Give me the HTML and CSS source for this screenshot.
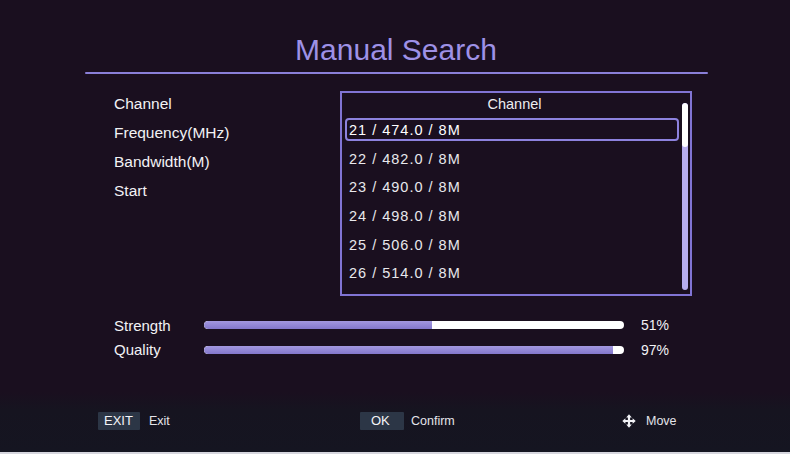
FILE: index.html
```html
<!DOCTYPE html>
<html lang="en">
<head>
<meta charset="utf-8">
<title>Manual Search</title>
<link rel="stylesheet" href="styles.css">
</head>
<body>
<div class="screen">
  <header class="head">
    <h1 class="title">Manual Search</h1>
    <div class="rule"></div>
  </header>

  <section class="main">
    <ul class="labels">
      <li>Channel</li>
      <li>Frequency(MHz)</li>
      <li>Bandwidth(M)</li>
      <li>Start</li>
    </ul>
    <div class="listbox">
      <div class="listcol">
        <div class="listhead">Channel</div>
        <ul class="items">
          <li class="item"><span class="sel">21 / 474.0 / 8M</span></li>
          <li class="item"><span>22 / 482.0 / 8M</span></li>
          <li class="item"><span>23 / 490.0 / 8M</span></li>
          <li class="item"><span>24 / 498.0 / 8M</span></li>
          <li class="item"><span>25 / 506.0 / 8M</span></li>
          <li class="item"><span>26 / 514.0 / 8M</span></li>
        </ul>
      </div>
      <div class="scroll"><div class="thumb"></div></div>
    </div>
  </section>

  <section class="signal">
    <div class="sigrow">
      <span class="siglabel">Strength</span>
      <div class="bar"><div class="fill" style="width:54.3%"></div></div>
      <span class="pct">51%</span>
    </div>
    <div class="sigrow">
      <span class="siglabel">Quality</span>
      <div class="bar"><div class="fill" style="width:97.4%"></div></div>
      <span class="pct">97%</span>
    </div>
  </section>

  <footer class="foot">
    <div class="hint"><span class="key">EXIT</span><span class="desc">Exit</span></div>
    <div class="hint"><span class="key key-ok">OK</span><span class="desc desc-ok">Confirm</span></div>
    <div class="hint">
      <svg class="move" viewBox="0 0 14 14" width="14" height="14" aria-hidden="true">
        <path d="M7 0.3 L9.8 3.4 H8.1 V5.9 H10.6 V4.2 L13.7 7 L10.6 9.8 V8.1 H8.1 V10.6 H9.8 L7 13.7 L4.2 10.6 H5.9 V8.1 H3.4 V9.8 L0.3 7 L3.4 4.2 V5.9 H5.9 V3.4 H4.2 Z" fill="#f2f2f6"/>
      </svg>
      <span class="desc">Move</span>
    </div>
  </footer>
</div>
</body>
</html>
```

FILE: styles.css
```css
* { box-sizing: border-box; }

html, body {
  margin: 0;
  padding: 0;
  background: #1a0f1f;
}

body {
  font-family: "Liberation Sans", Arial, sans-serif;
  color: #f0eff4;
}

.screen {
  width: 790px;
  height: 454px;
  display: flex;
  flex-direction: column;
  background: #1a0f1f;
  overflow: hidden;
}

/* header */
.head {
  padding-top: 35px;
}

.title {
  margin: 0;
  height: 30px;
  line-height: 30px;
  font-size: 30px;
  font-weight: normal;
  text-align: center;
  color: #9e91e6;
  padding-left: 2px;
}

.rule {
  margin: 7px 82px 0 85px;
  height: 2px;
  background: #8a7fd8;
  border-radius: 1px;
}

/* main */
.main {
  display: flex;
  padding: 17px 0 0 114px;
}

.labels {
  list-style: none;
  margin: -2px 0 0;
  padding: 0;
  flex: 0 0 226px;
  font-size: 15.5px;
  line-height: 29px;
  color: #f2f2f5;
}

.listbox {
  flex: 0 0 352px;
  height: 205px;
  border: 2px solid #8174d4;
  display: flex;
}

.listcol {
  flex: 1;
  padding-right: 3px;
}

.listhead {
  height: 22px;
  line-height: 22px;
  text-align: center;
  font-size: 14.5px;
  color: #ececf0;
  padding-left: 8px;
}

.items {
  list-style: none;
  margin: 0;
  padding: 0;
}

.item {
  height: 28.7px;
  display: flex;
  align-items: center;
  padding-left: 3px;
  font-size: 14.5px;
  letter-spacing: 1px;
  color: #e8e8ec;
}

.item span {
  flex: 1;
  height: 23px;
  line-height: 20px;
  padding-left: 2px;
  border: 2px solid transparent;
}

.item .sel {
  border-color: #8d82de;
  border-radius: 4px;
  color: #ffffff;
}

.scroll {
  flex: 0 0 6px;
  margin: 10px 2px 4px 0;
  background: #b7adee;
  border-radius: 3px;
  overflow: hidden;
}

.thumb {
  height: 44px;
  background: #ffffff;
  border-radius: 3px;
}

/* signal */
.signal {
  padding: 17px 0 0 114px;
}

.sigrow {
  display: flex;
  align-items: center;
  height: 24.5px;
  font-size: 15px;
  color: #f2f2f5;
}

.siglabel {
  flex: 0 0 90px;
}

.bar {
  flex: 0 0 420px;
  height: 8px;
  background: #ffffff;
  border-radius: 4px;
  overflow: hidden;
}

.fill {
  height: 100%;
  background: linear-gradient(#a398e0, #8377cc);
  border-radius: 4px 0 0 4px;
}

.pct {
  margin-left: 17px;
  font-size: 14px;
}

/* footer */
.foot {
  margin-top: auto;
  height: 62px;
  padding: 20px 0 0 98px;
  display: grid;
  grid-template-columns: 262px 262px auto;
  align-items: start;
  background: linear-gradient(#1a0f1f, #161420 30%, #151521);
  border-bottom: 2px solid #d6d6de;
}

.hint {
  display: flex;
  align-items: center;
  height: 18px;
}

.key {
  display: inline-block;
  height: 18px;
  line-height: 18px;
  padding: 0 6px;
  min-width: 42px;
  background: #2c3646;
  color: #f4f4f8;
  font-size: 13px;
  border-radius: 1px;
}

.key-ok {
  min-width: 44px;
  padding-left: 11px;
}

.desc {
  margin-left: 9px;
  font-size: 12.5px;
  color: #e4e4ea;
}

.desc-ok {
  margin-left: 7px;
}

.move {
  display: block;
}

.hint .move + .desc {
  margin-left: 10px;
}
```
